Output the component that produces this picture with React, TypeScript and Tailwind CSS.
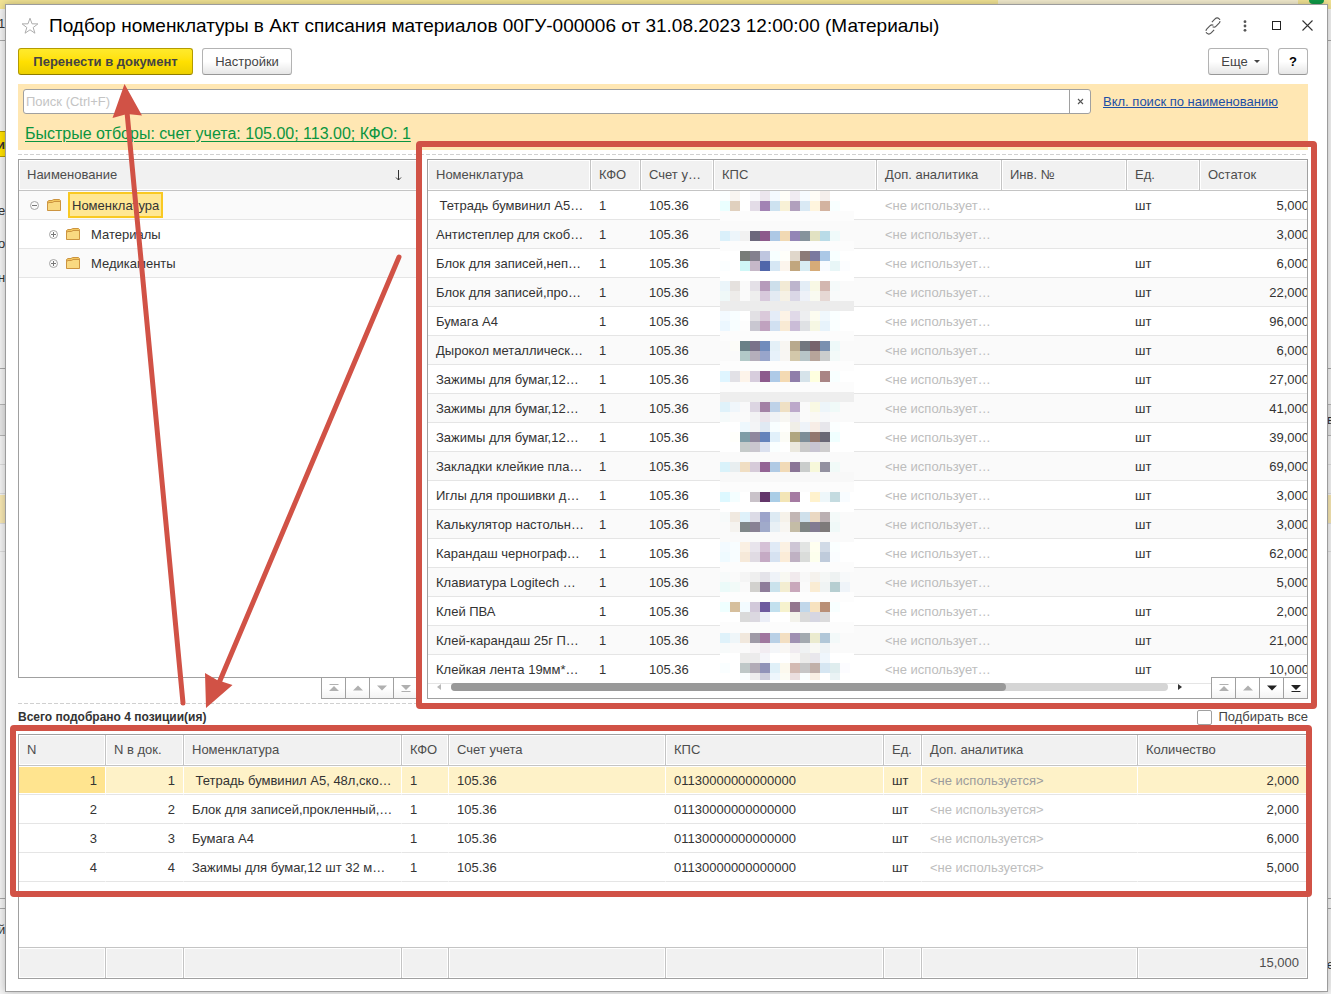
import { ReactNode, useState } from "react";

type StockRow = {
  name: string;
  unit: string;
  rest: string;
};

type PickedRow = {
  n: number;
  name: string;
  qty: string;
};

type MosaicStrip = [y: number, height: number, base: string, cells: string];

const App = () => {
  const [search, setSearch] = useState("");
  const [pickAll, setPickAll] = useState(false);

  return (
    <div className="relative flex min-h-screen flex-col overflow-hidden bg-[#f1f1f1] pt-1 pr-[3px] pb-[2px] pl-[5px] font-['Liberation_Sans',Arial,sans-serif] text-[13px] leading-4 text-[#333]">
      <Backdrop />
      <main className="relative flex flex-1 flex-col border border-[#9c9c9c] bg-white pr-[19px] pb-3 pl-3 shadow-[0_0_8px_rgba(0,0,0,0.25)]">
        <TitleBar />

        <div className="flex items-center gap-[9px]">
          <button
            type="button"
            className="h-[27px] w-[175px] rounded-[3px] border border-[#b39b00] border-b-[#8f7c00] bg-linear-to-b from-[#ffea2b] via-[#ffe000] to-[#ecd000] font-bold text-[#444]"
          >
            Перенести в документ
          </button>
          <GreyButton className="w-[90px]">Настройки</GreyButton>
          <GreyButton className="ml-auto flex w-[61px] items-center justify-center gap-[6px] pl-1">
            Еще
            <svg width="6" height="3" viewBox="0 0 6 3">
              <path d="M0 0h6L3 3z" fill="#444" />
            </svg>
          </GreyButton>
          <GreyButton className="w-[30px] font-bold text-black">?</GreyButton>
        </div>

        <section className="mt-[9px] h-[66px] bg-[#ffe7b3] pt-[5px] pl-[5px]">
          <div className="flex items-center pr-[30px]">
            <div className="flex h-[25px] flex-1 rounded-[3px] border border-[#a0a0a0] bg-white">
              <input
                type="text"
                aria-label="Поиск"
                placeholder="Поиск (Ctrl+F)"
                value={search}
                onChange={(event) => setSearch(event.target.value)}
                className="min-w-0 flex-1 px-[2px] placeholder:text-[#c4c4c4] focus:outline-none"
              />
              <button
                type="button"
                aria-label="Очистить"
                onClick={() => setSearch("")}
                className="flex w-[21px] items-center justify-center border-l border-[#a0a0a0]"
              >
                <svg width="7" height="7" viewBox="0 0 7 7">
                  <path d="M1 1l5 5M6 1L1 6" stroke="#555" strokeWidth="1.1" />
                </svg>
              </button>
            </div>
            <a href="#name" className="ml-3 text-[#1d4fa5] underline">
              Вкл. поиск по наименованию
            </a>
          </div>
          <a
            href="#filters"
            className="ml-[2px] mt-[10px] inline-block text-base leading-5 text-[#0a9540] underline underline-offset-2"
          >
            Быстрые отборы: счет учета: 105.00; 113.00; КФО: 1
          </a>
        </section>

        <div className="mt-1 h-[5px]">
          <DashedLine />
        </div>

        <div className="flex h-[540px]">
          <GroupTree />
          <div className="w-[5px] border-r border-dashed border-[#cfcfcf]" />
          <div className="ml-[5px] min-w-0 flex-1">
            <StockPanel />
          </div>
        </div>

        <div className="mt-1">
          <DashedLine />
        </div>

        <div className="mt-[3px] flex h-[27px] items-start justify-between">
          <p className="pt-[2px] text-[12px] font-bold">
            Всего подобрано 4 позиции(ия)
          </p>
          <label className="flex items-center gap-[6px] pt-[2px] text-[#444]">
            <input
              type="checkbox"
              checked={pickAll}
              onChange={(event) => setPickAll(event.target.checked)}
              className="size-[15px] appearance-none rounded-[2px] border border-[#a0a0a0] bg-white checked:bg-[#ffe000]"
            />
            Подбирать все
          </label>
        </div>

        <PickedPanel />
      </main>
      <Arrows />
    </div>
  );
};

export default App;

const TitleBar = () => (
  <header className="-mr-[5px] flex h-[43px] items-center pb-[2px]">
    <svg width="18" height="18" viewBox="0 0 18 18" className="ml-[3px]">
      <path
        d="M9 1.2l2 5.6 5.9.1-4.7 3.6 1.7 5.7L9 12.8l-4.9 3.4 1.7-5.7L1.1 6.9 7 6.8z"
        fill="#fff"
        stroke="#adadad"
      />
    </svg>
    <h1 className="ml-[10px] flex-1 text-[19px] leading-6 text-black">
      Подбор номенклатуры в Акт списания материалов 00ГУ-000006 от 31.08.2023
      12:00:00 (Материалы)
    </h1>
    <button type="button" aria-label="Ссылка" className="mr-[21px]">
      <svg width="18" height="18" viewBox="0 0 16 16" fill="none" stroke="#555">
        <path
          d="M7 4.5l2.6-2.6c1.2-1.2 2.800-1.300 3.900-.3s1 2.700-.1 3.900L10.800 8.100c-1.100 1.100-2.500 1.100-3.500.3"
          strokeDasharray="9 1.2"
        />
        <path
          d="M9 11.500l-2.600 2.600c-1.200 1.200-2.800 1.300-3.900.3s-1-2.700.1-3.900l2.600-2.600c1.100-1.100 2.500-1.100 3.500-.3"
          strokeDasharray="9 1.2"
        />
      </svg>
    </button>
    <button type="button" aria-label="Меню" className="mr-[25px]">
      <svg width="4" height="12" viewBox="0 0 4 12" fill="#555">
        <circle cx="2" cy="1.7" r="1.4" />
        <circle cx="2" cy="6" r="1.4" />
        <circle cx="2" cy="10.3" r="1.4" />
      </svg>
    </button>
    <button
      type="button"
      aria-label="Развернуть"
      className="mr-[21px] size-[9px] border border-[#222]"
    />
    <button type="button" aria-label="Закрыть">
      <svg width="11" height="11" viewBox="0 0 11 11">
        <path d="M.5.5l10 10M10.5.5l-10 10" stroke="#333" strokeWidth="1.1" />
      </svg>
    </button>
  </header>
);

const GreyButton = ({
  className,
  children,
}: {
  className: string;
  children: ReactNode;
}) => (
  <button
    type="button"
    className={`h-[27px] rounded-[3px] border border-[#b3b3b3] border-b-[#979797] bg-linear-to-b from-white from-50% to-[#e6e6e6] text-[#444] ${className}`}
  >
    {children}
  </button>
);

const DashedLine = () => (
  <div className="h-px w-full bg-[repeating-linear-gradient(90deg,#d0d0d0_0_4px,transparent_4px_6px)]" />
);

const HEAD =
  "h-[31px] border-b border-[#c4c4c4] bg-[#f1f1f1] px-2 text-left font-normal text-[#4d4d4d] shadow-[inset_0_0_0_1px_#fff] whitespace-nowrap overflow-hidden";
const CELL = "h-[29px] border-b border-[#e5e5e5] pt-[2px] pl-2 truncate";

const GroupTree = () => (
  <div className="relative w-[399px]">
    <div className="h-[519px] border-t border-b border-l border-[#a0a0a0]">
      <div className={`${HEAD} flex items-center justify-between pr-[15px]`}>
        Наименование
        <svg width="7" height="11" viewBox="0 0 7 11">
          <path d="M3.5 0v10M1 7.5L3.5 10 6 7.5" stroke="#333" fill="none" />
        </svg>
      </div>
      <ul>
        <li className="flex h-[29px] items-center border-b border-[#e5e5e5] bg-[#fafafa] pl-[11px]">
          <Toggle />
          <Folder />
          <span className="ml-[6px] border-2 border-[#f9c922] bg-[#ffe793] px-[2px] pt-1 pb-[2px]">
            Номенклатура
          </span>
        </li>
        <li className="flex h-[29px] items-center border-b border-[#e5e5e5] pl-[30px]">
          <Toggle closed />
          <Folder />
          <span className="ml-[10px] pt-[2px]">Материалы</span>
        </li>
        <li className="flex h-[29px] items-center border-b border-[#e5e5e5] bg-[#fafafa] pl-[30px]">
          <Toggle closed />
          <Folder />
          <span className="ml-[10px] pt-[2px]">Медикаменты</span>
        </li>
      </ul>
    </div>
    <NavButtons active={false} className="absolute right-0 bottom-0" />
  </div>
);

const Toggle = ({ closed = false }: { closed?: boolean }) => (
  <svg width="9" height="9" viewBox="0 0 9 9" fill="none">
    <circle cx="4.5" cy="4.5" r="4" stroke="#a5a5a5" />
    <path d={closed ? "M2 4.5h5M4.5 2v5" : "M2 4.5h5"} stroke="#777" />
  </svg>
);

const Folder = () => (
  <svg width="14" height="12" viewBox="0 0 14 12" className="mr-px ml-2">
    <path d="M.5 11V2.500L2 1.500h3L6.500.5h6l1 1V11z" fill="#f3c75d" stroke="#cc9440" />
    <path d="M.5 4.500L2 3.500h3.500L7 2.500h6.500v9H.5z" fill="#f9d981" stroke="#cc9440" />
  </svg>
);

const NAV_ICONS = [
  { label: "В начало", path: "M.500 0h9v1h-9zM5 2l5 5H0z", down: false },
  { label: "Вверх", path: "M5 1.500l5 5H0z", down: false },
  { label: "Вниз", path: "M0 1.500h10l-5 5z", down: true },
  { label: "В конец", path: "M0 1h10L5 6zM.500 7h9v1h-9z", down: true },
];

const NavButtons = ({
  active,
  className,
}: {
  active: boolean;
  className: string;
}) => (
  <div className={`flex border-l border-[#a0a0a0] bg-white ${className}`}>
    {NAV_ICONS.map((icon, index) => (
      <button
        key={icon.label}
        type="button"
        aria-label={icon.label}
        className={`flex h-[22px] items-center justify-center border-y border-[#a0a0a0] bg-linear-to-b from-white from-50% to-[#f3f3f3] ${
          index < 3 ? "w-6 border-r" : "w-[23px]"
        }`}
      >
        <svg width="10" height="8" viewBox="0 0 10 8">
          <path d={icon.path} fill={active && icon.down ? "#222" : "#b0b0b0"} />
        </svg>
      </button>
    ))}
  </div>
);

const STOCK_COLUMNS = [
  { title: "Номенклатура", width: "w-[163px]" },
  { title: "КФО", width: "w-[50px]" },
  { title: "Счет у…", width: "w-[73px]" },
  { title: "КПС", width: "w-[163px]" },
  { title: "Доп. аналитика", width: "w-[125px]" },
  { title: "Инв. №", width: "w-[125px]" },
  { title: "Ед.", width: "w-[73px]" },
  { title: "Остаток", width: "w-[117px]" },
];

const StockPanel = () => (
  <div className="relative h-full border border-[#a0a0a0]">
    <div className="relative h-full overflow-hidden">
      <table className="w-[889px] table-fixed border-separate border-spacing-0">
        <thead>
          <tr>
            {STOCK_COLUMNS.map((column) => (
              <th key={column.title} className={`${HEAD} ${column.width} border-r`}>
                {column.title}
              </th>
            ))}
          </tr>
        </thead>
        <tbody>
          {STOCK.map((row, index) => (
            <tr key={index} className="even:bg-[#fafafa]">
              <td className={`${CELL} whitespace-pre`}>{row.name}</td>
              <td className={CELL}>1</td>
              <td className={CELL}>105.36</td>
              <td className={CELL} />
              <td className={`${CELL} text-[#bdbdbd]`}>&lt;не использует…</td>
              <td className={CELL} />
              <td className={CELL}>{row.unit}</td>
              <td className={`${CELL} pr-2 text-right`}>{row.rest}</td>
            </tr>
          ))}
        </tbody>
      </table>
      <Mosaic />
      <div className="absolute inset-x-0 bottom-0 flex h-[15px] items-start pl-[9px]">
        <svg width="4" height="6" viewBox="0 0 4 6" className="mt-[1px]">
          <path d="M4 0v6L0 3z" fill="#b8b8b8" />
        </svg>
        <div className="ml-[10px] h-2 w-[717px] rounded-full bg-[#d5d5d5]">
          <div className="h-2 w-[555px] rounded-full bg-[#999]" />
        </div>
        <svg width="4" height="6" viewBox="0 0 4 6" className="mt-[1px] ml-[10px]">
          <path d="M0 0v6l4-3z" fill="#333" />
        </svg>
      </div>
    </div>
    <NavButtons active className="absolute right-0 -bottom-px" />
    <div className="pointer-events-none absolute -top-[19px] -right-[10px] -bottom-[11px] -left-[12px] rounded-[4px] border-6 border-[#d15246]" />
  </div>
);

// blurred out КПС values
const Mosaic = () => (
  <svg
    width="134"
    height="489"
    viewBox="0 191 134 489"
    shapeRendering="crispEdges"
    className="absolute top-[31px] left-[292px]"
  >
    {MOSAIC.map(([y, height, base, cells]) => (
      <g key={y}>
        <rect x="0" y={y} width="134" height={height} fill={`#${base}`} />
        {cells.split(" ").map((cell, index) =>
          cell.length > 1 ? (
            <rect key={index} x={index * 10} y={y} width="10" height={height} fill={`#${cell}`} />
          ) : null
        )}
      </g>
    ))}
  </svg>
);

const PICKED_COLUMNS = [
  { title: "N", width: "w-[87px]" },
  { title: "N в док.", width: "w-[78px]" },
  { title: "Номенклатура", width: "w-[218px]" },
  { title: "КФО", width: "w-[47px]" },
  { title: "Счет учета", width: "w-[217px]" },
  { title: "КПС", width: "w-[218px]" },
  { title: "Ед.", width: "w-[38px]" },
  { title: "Доп. аналитика", width: "w-[216px]" },
  { title: "Количество", width: "w-[169px]" },
];

const PickedPanel = () => (
  <div className="relative flex flex-1 flex-col border border-[#a0a0a0]">
    <table className="w-full flex-1 table-fixed border-separate border-spacing-0">
      <thead>
        <tr>
          {PICKED_COLUMNS.map((column) => (
            <th key={column.title} className={`${HEAD} ${column.width} border-r last:border-r-0`}>
              {column.title}
            </th>
          ))}
        </tr>
      </thead>
      <tbody>
        {PICKED.map((row) => {
          const selected = row.n === 1;
          const cell = `${CELL} border-r ${
            selected
              ? "border-r-white bg-[#fef2c8] shadow-[inset_0_1px_0_#fff,inset_0_-1px_0_#fff]"
              : "border-r-transparent"
          }`;
          return (
            <tr key={row.n}>
              <td className={`${cell} pr-2 text-right ${selected ? "bg-[#ffe48f]!" : ""}`}>
                {row.n}
              </td>
              <td className={`${cell} pr-2 text-right`}>{row.n}</td>
              <td className={`${cell} whitespace-pre`}>{row.name}</td>
              <td className={cell}>1</td>
              <td className={cell}>105.36</td>
              <td className={cell}>01130000000000000</td>
              <td className={cell}>шт</td>
              <td className={`${cell} ${selected ? "text-[#9c9c9c]" : "text-[#bdbdbd]"}`}>
                &lt;не используется&gt;
              </td>
              <td className={`${cell} pr-[7px] text-right`}>{row.qty}</td>
            </tr>
          );
        })}
      </tbody>
    </table>
    <div className="h-[65px]" />
    <table className="w-full table-fixed border-separate border-spacing-0">
      <tbody>
        <tr>
          {PICKED_COLUMNS.map((column, index) => (
            <td
              key={column.title}
              className={`${HEAD} ${column.width} border-t border-r border-b-0 text-right! last:border-r-0`}
            >
              {index === PICKED_COLUMNS.length - 1 ? "15,000" : ""}
            </td>
          ))}
        </tr>
      </tbody>
    </table>
    <div className="pointer-events-none absolute -top-[10px] -right-[5px] -left-[9px] h-[172px] rounded-[4px] border-6 border-[#d15246]" />
  </div>
);

const Arrows = () => (
  <svg
    width="1331"
    height="994"
    viewBox="0 0 1331 994"
    className="pointer-events-none absolute top-0 left-0"
    stroke="#d15246"
    strokeWidth="5"
    strokeLinecap="round"
  >
    <path d="M183 703L127 112M399 257L216 690" />
    <path
      d="M124.5 84L112.5 118 127 114 142 115.5zM206 708L205 673 217 680 232.5 685z"
      fill="#d15246"
      stroke="none"
    />
  </svg>
);

// slices of the parent window that stay visible around the dialog
const Backdrop = () => (
  <div className="absolute inset-0 overflow-hidden bg-[#f3f3f3]" aria-hidden="true">
    <div className="h-[9px] bg-[#f2e394]">
      <div className="ml-[998px] h-[9px] w-[300px] bg-[#f4edcf]" />
    </div>
    <div className="absolute top-0 left-[1309px] h-1 w-[15px] rounded-b-full bg-[#0f9a48]" />
    <div className="absolute top-9 left-0 h-[5px] w-full border-b border-[#a8a8a8]" />
    <div className="absolute top-[131px] left-0 h-[26px] w-[5px] border-y border-[#b39b00] bg-[#ffe000]" />
    <div className="absolute top-[347px] left-0 h-[22px] w-full border-b border-[#a8a8a8]" />
    <div className="absolute top-[404px] left-0 h-8 w-full border-y border-[#b5b5b5] bg-[#e6e6e6]" />
    <div className="absolute top-[464px] left-0 h-[30px] w-full border-y border-[#dcdcdc]" />
    <div className="absolute top-[495px] left-0 h-7 w-full bg-[#f7e7b2]" />
    <div className="absolute top-[523px] left-0 h-[29px] w-full border-y border-[#dcdcdc]" />
    <div className="absolute top-[898px] left-0 h-[11px] w-full border-y border-[#a8a8a8]" />
    <span className="absolute top-4 -left-[2px]">1</span>
    <span className="absolute top-[137px] -left-[3px] font-bold">и</span>
    <span className="absolute top-[203px] -left-[2px]">е</span>
    <span className="absolute top-[236px] -left-[2px]">о</span>
    <span className="absolute top-[270px] -left-[2px]">н</span>
    <span className="absolute top-[922px] -left-[2px]">й</span>
    <span className="absolute top-[412px] -right-[3px]">в</span>
    <span className="absolute top-[957px] -right-[3px]">е</span>
  </div>
);

const STOCK: StockRow[] = [
  { name: " Тетрадь бумвинил А5…", unit: "шт", rest: "5,000" },
  { name: "Антистеплер для скоб…", unit: "", rest: "3,000" },
  { name: "Блок для записей,неп…", unit: "шт", rest: "6,000" },
  { name: "Блок для записей,про…", unit: "шт", rest: "22,000" },
  { name: "Бумага А4", unit: "шт", rest: "96,000" },
  { name: "Дырокол металлическ…", unit: "шт", rest: "6,000" },
  { name: "Зажимы для бумаг,12…", unit: "шт", rest: "27,000" },
  { name: "Зажимы для бумаг,12…", unit: "шт", rest: "41,000" },
  { name: "Зажимы для бумаг,12…", unit: "шт", rest: "39,000" },
  { name: "Закладки клейкие пла…", unit: "шт", rest: "69,000" },
  { name: "Иглы для прошивки д…", unit: "шт", rest: "3,000" },
  { name: "Калькулятор настольн…", unit: "шт", rest: "3,000" },
  { name: "Карандаш чернограф…", unit: "шт", rest: "62,000" },
  { name: "Клавиатура Logitech …", unit: "", rest: "5,000" },
  { name: "Клей ПВА", unit: "шт", rest: "2,000" },
  { name: "Клей-карандаш 25г П…", unit: "шт", rest: "21,000" },
  { name: "Клейкая лента 19мм*…", unit: "шт", rest: "10,000" },
];

const PICKED: PickedRow[] = [
  { n: 1, name: " Тетрадь бумвинил А5, 48л,ско…", qty: "2,000" },
  { n: 2, name: "Блок для записей,прокленный,…", qty: "2,000" },
  { n: 3, name: "Бумага А4", qty: "6,000" },
  { n: 4, name: "Зажимы для бумаг,12 шт 32 м…", qty: "5,000" },
];

// "-" keeps the strip's base colour
const MOSAIC: MosaicStrip[] = [
  [191, 10, "ffffff", "fbffff f9f5f1 - f8f8fb ece6ee f4faff fffef8 f0ebf2 f6fbff fffdf7 f5efec"],
  [201, 10, "ffffff", "eaffff e0d0be - e3dce7 a283b4 cde2f0 f8f1d6 b1a0bd d9e9f4 fff5de d3b3a0 f8ffff"],
  [211, 10, "fcfcfc", "-"],
  [221, 10, "fafafa", "-"],
  [231, 10, "fafafa", "daf0fa edf5fa f1f1f1 6c687c 8d5a8b adc8e5 f1d9b3 9385b6 86939c e2e2c2 b9dbe7 f0fafa"],
  [241, 10, "fcfcfc", "-"],
  [251, 10, "ffffff", "- - 787c78 84808e bfc6df f7ffff fffffa e0d7cb 8c7b78 7b799f abc8e6 f8ffff"],
  [261, 10, "ffffff", "fbfeff - cff7f7 c6b8c8 5066aa d6e7f4 fcf5ed c1a67e d8ecf3 d6ab78 f8fbff e8f6f7 fcfdff"],
  [271, 10, "ffffff", "-"],
  [281, 10, "fafafa", "ebf5fa e5e1de - e4e0e7 b69bbb cddfeb f2ead5 bdb5cd e3edf6 f8f8e5 d3b7b0 f5fafa"],
  [291, 10, "fafafa", "eff8f8 eeecea - eeeeee d8c9dc e3eaf3 f6f1e5 dad7e6 edf1f8 f9faf1 e6d8d4 f8fafa"],
  [301, 10, "ececec", "-"],
  [311, 10, "ffffff", "f3faff f8feff - e2e0e4 dac9da e4ecf7 fdf3e6 e0d9e8 edeef0 fcfcf0 f0f8fd faffff"],
  [321, 10, "ffffff", "ecf7ff f8feff fdfdfd c9c7d1 c0a2bf d1e0f1 f9ead4 cabcd7 dfe1e4 f6f7e3 e7f3fb faffff"],
  [331, 10, "fcfcfc", "-"],
  [341, 10, "fafafa", "- fcfcf8 6a8087 7a728a 718cbc e4f0f7 f8f6f2 b8a98d 72777f 77636c 7a90b0 eef9f9"],
  [351, 10, "fafafa", "- - b2c9c8 b5aebb 98a5cb e7f1fa f8f6f3 d3c8aa b7c5c8 b7a49a cbcdcd f3faf9"],
  [361, 10, "fdfdfd", "-"],
  [371, 11, "ffffff", "dff5ff e2e1e6 fdf4ea d7cddd 8d5b8d aecae7 f4dab3 8f7eaa d6e3ea feffdf a98585 f8ffff"],
  [382, 10, "fcfcfc", "-"],
  [392, 10, "eeeeee", "-"],
  [402, 10, "fafafa", "dff2fa f0f6fb f9f9fa dcd5e2 a381a5 bed2e8 efe0c4 bca8ca - f9f9e3 edf5fa f0faf8"],
  [412, 10, "fafafa", "f5fafa - - f2f2f4 ebe4eb eff2f5 f8f7f2 eeecf1 - faf9f4 f7f8fa"],
  [422, 10, "ffffff", "- - eef8fd f3f4f6 e0e9f3 f8feff fffffc f0eee7 eef3f9 f7ede6 e7e6eb fbffff"],
  [432, 10, "ffffff", "- fffffb 7f9da7 8f879e 6583bb e1f0fa fcfcf6 b0a680 7d8d98 92776f 6a6875 f0ffff"],
  [442, 10, "ffffff", "- - c6cbca cac7cf dbe1ef faffff - ebe9df cacaca c8c4d2 cfcece"],
  [452, 10, "fafafa", "-"],
  [462, 10, "fafafa", "d9f2fa e8eef0 f0dec3 d6cbd9 936494 b0cae4 f1dab7 8a7596 cacdcc f7f8da 9391a0 f1faf8"],
  [472, 10, "f8f8f8", "-"],
  [482, 10, "fcfcfc", "-"],
  [492, 10, "ffffff", "ddf8ff f4feff - c9c2c9 63366a aacde6 f3e5b6 a57ba2 - fff2cd eef7fa c4dbe0 f8fcff"],
  [502, 10, "ffffff", "-"],
  [512, 10, "fafafa", "f7fafa f0e9e0 dff1fa dcdbe6 9ca4ca ddeaf3 f6f2ea c2b6b4 cfe0eb ead8c2 bbb0b2 f4faf9"],
  [522, 10, "fafafa", "- f5f3ef 80888a 898194 a0aaca e8f0f5 f8f6f2 c4bca6 7e8584 837b92 7e7a7a f0f9f8"],
  [532, 10, "fafafa", "-"],
  [542, 10, "ffffff", "f3faff f8fdff faf0e3 e8e4ec d5c1d6 e0eaf6 fbf1e3 cec6d5 e2e4e3 fffff0 d1dae6 faffff"],
  [552, 10, "ffffff", "effaff f8fdff f6e9d9 e0dbe3 c5aac4 d6e2f1 fbecd8 bfb1c3 dadcda fdffed bfcbdb fafdff"],
  [562, 10, "fcfcfc", "-"],
  [572, 10, "fafafa", "f7fafa - f5f5f5 efefef e4e3e9 eff3f8 f8f8f2 f1eaed f8f8f8 f5f2ed f5f7f6 eef2f2 f7f9fa"],
  [582, 10, "fafafa", "ebfaf9 f2faf8 - d2d1ce 8e7d9a cae2ec f3edd1 c9a8bb - faecd3 f0f4f4 b6ced1 eff4f9"],
  [592, 10, "fdfdfd", "-"],
  [602, 10, "ffffff", "efffff d6bf9d f3fbff d2c9da 6d5a9e c2e0ee f6f2ce 93768e c1d7ea f7e2bf b98f76 f8ffff"],
  [612, 10, "ffffff", "- - dadada dbd8e0 ebeef7 - - f3f2eb dadada d6d6e2 dbdbdc"],
  [622, 11, "fcfcfc", "-"],
  [633, 10, "fafafa", "dff2fa eff6f9 f1e8dd 9f9aa7 a0769f b9d0e6 f3dfc2 9f90b2 a3aab0 ebebcf b1c7d8 f3f9f9"],
  [643, 10, "fafafa", "f7fafa - - f7f4f6 f2ecf2 f4f6f9 f9f7f4 f0ebf0 eff2f3 f8f8f4 eef3f6"],
  [653, 10, "ffffff", "- - ebebea ecebec f5f5fa - - f9f7f6 ebebea e9e7ec eff6fc"],
  [663, 10, "ffffff", "fafeff - bfc8c8 b2abb7 9193b8 e0f0f8 fcf9ee d3bab3 c7c7c7 c1b0a9 d6e6f2 dfedee fcfcff"],
  [673, 7, "ffffff", "- - fafeff eeecee cdcddb eef6fc fcfcf4 ebdedf faffff f9efe3 - eaf3f4"],
];
